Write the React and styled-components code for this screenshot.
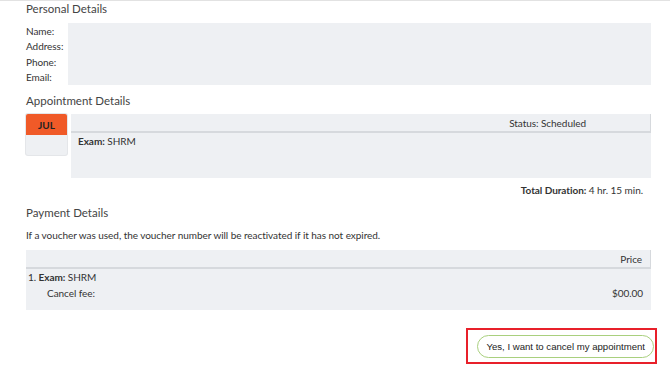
import React from "react";
import styled, { createGlobalStyle } from "styled-components";

const GlobalStyle = createGlobalStyle`
  html, body {
    margin: 0;
    padding: 0;
    background: #fff;
  }
  body {
    font-family: Lato, "Open Sans", sans-serif;
    color: #333;
    font-size: 10px;
    letter-spacing: -0.05px;
  }
`;

const Page = styled.div`
  width: 670px;
  height: 375px;
  box-sizing: border-box;
  border-top: 1px solid #e2e2e2;
  padding: 0 19px 0 26px;
  overflow: hidden;
`;

const SectionTitle = styled.h2`
  margin: 0;
  font-size: 11.5px;
  font-weight: 400;
  line-height: 15px;
  color: #444;
  letter-spacing: 0;
  padding-top: ${(p) => p.$top || 0}px;
`;

const PersonalRow = styled.div`
  display: flex;
  gap: 4px;
  margin-top: 7px;
  height: 62px;
`;

const Labels = styled.div`
  display: flex;
  flex-direction: column;
  width: 38px;
  padding-top: 1px;
  line-height: 15.4px;
`;

const GrayBox = styled.div`
  flex: 1;
  background: #eef0f3;
`;

const ApptRow = styled.div`
  display: flex;
  gap: 4px;
  margin-top: 6px;
`;

const DateCard = styled.div`
  width: 41px;
  height: 41px;
  background: #eef0f3;
  border-radius: 2px;
  box-shadow: 0 0 0 1px #e4e6e9;
`;

const Month = styled.div`
  height: 21px;
  background: #f05a28;
  color: #222;
  font-weight: 700;
  font-size: 10px;
  display: flex;
  align-items: center;
  justify-content: center;
  border-radius: 2px 2px 0 0;
`;

const ApptPanel = styled.div`
  flex: 1;
  background: #eef0f3;
  height: 64px;
  display: flex;
  flex-direction: column;
`;

const PanelHeader = styled.div`
  height: 17px;
  display: flex;
  align-items: center;
  justify-content: flex-end;
  padding-right: 64px;
  border-bottom: 2px solid #d6d9dd;
  border-right: 1px solid #d6d9dd;
`;

const PanelBody = styled.div`
  padding: 2px 7px;
`;

const Duration = styled.div`
  text-align: right;
  padding-right: 8px;
  margin-top: 6px;
`;

const Note = styled.p`
  margin: 9px 0 0;
`;

const Table = styled.div`
  margin-top: 9px;
  background: #eef0f3;
`;

const TableHead = styled.div`
  height: 17px;
  display: flex;
  align-items: center;
  justify-content: flex-end;
  padding-right: 8px;
  border-bottom: 2px solid #d6d9dd;
  border-right: 1px solid #d6d9dd;
`;

const TableBody = styled.div`
  padding: 1px 8px 9px 2px;
  line-height: 15.5px;
`;

const LineRow = styled.div`
  display: flex;
  justify-content: space-between;
  padding-left: ${(p) => p.$indent || 0}px;
`;

const Actions = styled.div`
  display: flex;
  justify-content: flex-end;
  margin-top: 18px;
  margin-right: -6px;
`;

const Highlight = styled.div`
  border: 2px solid #e8202a;
  padding: 5px 1px 4px 9px;
`;

const CancelButton = styled.button`
  font-family: "Liberation Sans", Arial, sans-serif;
  font-size: 9.6px;
  color: #222;
  background: #fff;
  border: 1px solid #a9d07e;
  border-radius: 12px;
  height: 23px;
  padding: 0 8px;
  cursor: pointer;
`;

export default function App() {
  return (
    <>
      <GlobalStyle />
      <Page>
        <SectionTitle $top={0}>Personal Details</SectionTitle>
        <PersonalRow>
          <Labels>
            <span>Name:</span>
            <span>Address:</span>
            <span>Phone:</span>
            <span>Email:</span>
          </Labels>
          <GrayBox />
        </PersonalRow>

        <SectionTitle $top={8}>Appointment Details</SectionTitle>
        <ApptRow>
          <DateCard>
            <Month>JUL</Month>
          </DateCard>
          <ApptPanel>
            <PanelHeader>Status: Scheduled</PanelHeader>
            <PanelBody>
              <b>Exam:</b> SHRM
            </PanelBody>
          </ApptPanel>
        </ApptRow>
        <Duration>
          <b>Total Duration:</b> 4 hr. 15 min.
        </Duration>

        <SectionTitle $top={9}>Payment Details</SectionTitle>
        <Note>
          If a voucher was used, the voucher number will be reactivated if it has not expired.
        </Note>
        <Table>
          <TableHead>Price</TableHead>
          <TableBody>
            <LineRow>
              <span>
                1. <b>Exam:</b> SHRM
              </span>
            </LineRow>
            <LineRow $indent={19}>
              <span>Cancel fee:</span>
              <span>$00.00</span>
            </LineRow>
          </TableBody>
        </Table>

        <Actions>
          <Highlight>
            <CancelButton>Yes, I want to cancel my appointment</CancelButton>
          </Highlight>
        </Actions>
      </Page>
    </>
  );
}
